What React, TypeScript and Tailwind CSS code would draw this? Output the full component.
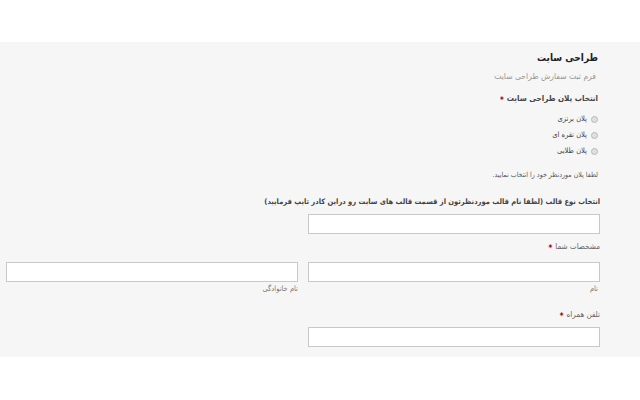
const plans = ["پلان برنزی", "پلان نقره ای", "پلان طلایی"];

function Label({
  text,
  required,
  bold,
  className = "",
}: {
  text: string;
  required?: boolean;
  bold?: boolean;
  className?: string;
}) {
  return (
    <div className={`leading-[16px] ${bold ? "font-bold text-[#444]" : "text-[#666]"} ${className}`}>
      {text}
      {required && (
        <span className="mr-[3px] inline-block translate-y-[2px] text-[8px] font-bold text-[#a80000]">*</span>
      )}
    </div>
  );
}

function Field() {
  return <div className="h-[20px] w-full border border-[#c8c8c8] bg-white" />;
}

export default function App() {
  return (
    <div
      className="h-[400px] w-[640px] bg-white"
      style={{ fontFamily: '"DejaVu Sans Condensed", "DejaVu Sans", sans-serif' }}
    >
      <div className="h-[42px]" />
      <div dir="rtl" className="bg-[#f6f6f6] pb-[10px] pl-[6px] pr-[40px] pt-[6px]">
        <h1 className="pr-[2px] text-[10px] font-bold leading-[20px] text-[#222]">طراحی سایت</h1>
        <p className="pr-[4px] text-[8.5px] leading-[16px] text-[#999]">فرم ثبت سفارش طراحی سایت</p>

        <Label text="انتخاب پلان طراحی سایت" required bold className="mt-[7px] pr-[2px] text-[8px]" />
        <ul className="mt-[4px]">
          {plans.map((p) => (
            <li
              key={p}
              className="flex h-[16px] items-center gap-[4px] pr-[2px] text-[7.5px] text-[#444]"
            >
              <span className="h-[7px] w-[7px] rounded-full border border-[#b8b8b8] bg-[#e0e0e0]" />
              {p}
            </li>
          ))}
        </ul>
        <p className="mt-[9px] pr-[2px] text-[7px] leading-[14px] text-[#555]">
          لطفا پلان موردنظر خود را انتخاب نمایید.
        </p>

        <Label
          text="انتخاب نوع قالب (لطفا نام قالب موردنظرتون از قسمت قالب های سایت رو دراین کادر تایپ فرمایید)"
          bold
          className="mt-[12px] text-[7.5px]"
        />
        <div className="mt-[4px] w-[292px]">
          <Field />
        </div>

        <Label text="مشخصات شما" required className="mt-[5px] text-[8px]" />
        <div className="mt-[7px] grid grid-cols-2 gap-[10px]">
          <div>
            <Field />
            <div className="mt-[1px] pr-[2px] text-[7.5px] leading-[12px] text-[#777]">نام</div>
          </div>
          <div>
            <Field />
            <div className="mt-[1px] text-[7.5px] leading-[12px] text-[#777]">نام خانوادگی</div>
          </div>
        </div>

        <Label text="تلفن همراه" required className="mt-[12px] text-[8px]" />
        <div className="mt-[4px] w-[292px]">
          <Field />
        </div>
      </div>
    </div>
  );
}
